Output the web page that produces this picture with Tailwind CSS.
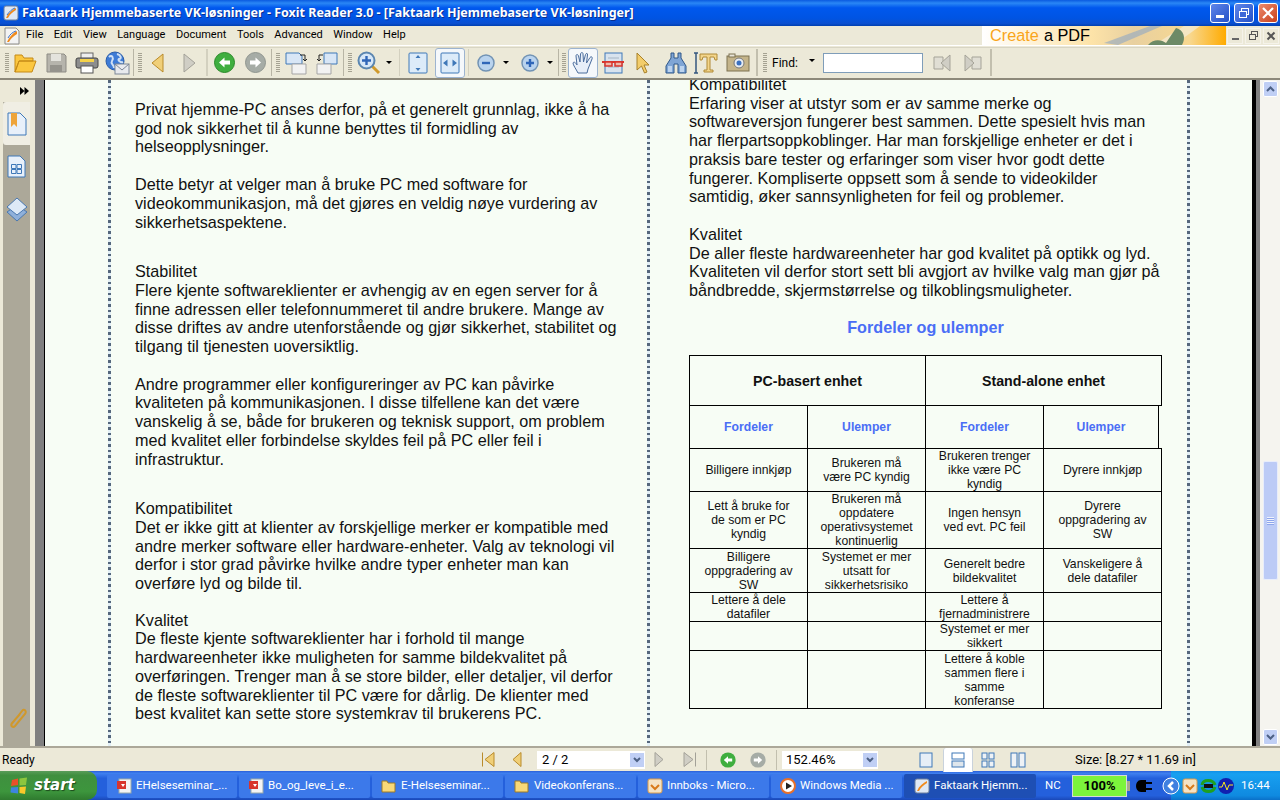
<!DOCTYPE html>
<html lang="no">
<head>
<meta charset="UTF-8">
<title>Foxit Reader</title>
<script src="https://cdn.jsdelivr.net/npm/@tailwindcss/browser@4"></script>
</head>
<body class="w-[1280px] h-[800px] overflow-hidden bg-[#ece9d8] font-['Roboto',sans-serif] text-[11px] text-black">
<!-- title bar -->
<div class="h-[26px] flex items-center bg-[linear-gradient(180deg,#0a5ae0_0%,#2a87f5_12%,#0058ee_30%,#0054e3_70%,#0a4fd0_90%,#003fb0_100%)]">
  <svg class="ml-[3px] w-[16px] h-[16px]" viewBox="0 0 16 16"><rect x="1" y="1" width="14" height="14" rx="2" fill="#dfe8f5" stroke="#6b7f9c"/><path d="M3 13C5 8 9 5 13 3L13 5C10 7 7 9 5 13Z" fill="#f08a1d"/><path d="M4 10C6 7 9 4 12 3" stroke="#3a6fc4" fill="none"/></svg>
  <div class="ml-[3px] font-['Noto_Sans',sans-serif] font-bold text-[12.500px] text-white whitespace-nowrap [text-shadow:1px_1px_0_#0a2f90]">Faktaark Hjemmebaserte VK-løsninger - Foxit Reader 3.0 - [Faktaark Hjemmebaserte VK-løsninger]</div>
  <div class="ml-auto mr-[2px] flex gap-[4px]">
    <div class="w-[20px] h-[20px] rounded-[3px] border border-white bg-[linear-gradient(135deg,#5f86ea,#2450c8)] flex items-end pl-[5px] pb-[4px]"><div class="w-[8px] h-[3px] bg-white"></div></div>
    <div class="w-[20px] h-[20px] rounded-[3px] border border-white bg-[linear-gradient(135deg,#5f86ea,#2450c8)] flex items-center justify-center"><svg class="w-[12px] h-[12px]" viewBox="0 0 12 12" fill="none" stroke="#fff"><rect x="3.5" y="1.5" width="7" height="6"/><rect x="1.5" y="4.5" width="7" height="6" fill="#3c66d8"/><path d="M1 4.5H9M3 1.5H11" /></svg></div>
    <div class="w-[20px] h-[20px] rounded-[3px] border border-white bg-[linear-gradient(135deg,#ec8a6c,#c8401c)] flex items-center justify-center"><svg class="w-[14px] h-[14px]" viewBox="0 0 14 14" stroke="#fff" stroke-width="2.2"><path d="M2 2L12 12M12 2L2 12"/></svg></div>
  </div>
</div>
<!-- menu bar -->
<div class="h-[20px] flex items-center border-b border-white">
  <svg class="ml-[4px] w-[16px] h-[18px]" viewBox="0 0 16 18"><path d="M1 1H12L15 4V17H1Z" fill="#f3f3f3" stroke="#8a8a8a"/><path d="M3 15C5 10 9 6 13 4L13 7C10 9 7 11 5 15Z" fill="#f08a1d"/><path d="M4 11C6 7 9 5 12 4" stroke="#3a6fc4" fill="none"/></svg>
  <div class="ml-[6px] flex gap-[10.500px] whitespace-nowrap">
    <span>File</span><span>Edit</span><span>View</span><span>Language</span><span>Document</span><span>Tools</span><span>Advanced</span><span>Window</span><span>Help</span>
  </div>
  <div class="relative ml-auto w-[244px] h-[19px] flex items-center pl-[8px] overflow-hidden bg-[linear-gradient(90deg,#ffffff_0%,#fde3a8_45%,#e8d0a0_62%,#f8d890_85%,#ffab00_100%)] font-['Liberation_Sans',sans-serif] text-[16.300px] leading-none whitespace-nowrap">
    <span class="text-[#f9a51a]">Create</span><span class="ml-[5px] text-black">a PDF</span>
    <svg class="absolute right-[12px] top-0 w-[110px] h-[19px]" viewBox="0 0 110 19"><path d="M0 17L46 0H58L14 19Z" fill="#8ea6c4" opacity=".6"/><path d="M50 19L80 0H96L70 19Z" fill="#f4ecd8" opacity=".7"/><path d="M44 19C50 12 58 14 62 17L72 2C80 4 82 12 78 19Z" fill="#6d8a66"/></svg>
  </div>
  <div class="flex gap-[2px] ml-[1px] mr-[1px]">
    <div class="w-[16px] h-[16px] border border-[#f5f3ea] flex items-end justify-center pb-[3px]"><div class="w-[7px] h-[2px] bg-[#666]"></div></div>
    <div class="w-[16px] h-[16px] border border-[#f5f3ea] flex items-center justify-center"><svg class="w-[11px] h-[11px]" viewBox="0 0 11 11" fill="none" stroke="#555"><rect x="3.5" y="1.5" width="6" height="5"/><rect x="1.5" y="4.5" width="6" height="5" fill="#ece9d8"/></svg></div>
    <div class="w-[16px] h-[16px] border border-[#f5f3ea] flex items-center justify-center"><svg class="w-[10px] h-[10px]" viewBox="0 0 10 10" stroke="#555" stroke-width="2"><path d="M1.500 1.500L8.500 8.500M8.500 1.500L1.500 8.500"/></svg></div>
  </div>
</div>
<!-- toolbar -->
<div class="h-[33px] mt-px flex items-center border-t border-[#d8d5c4] border-b-2 border-b-[#8d897a] pl-[5px] pb-[1px]">
  <div class="w-[4px] h-[20px] bg-[repeating-linear-gradient(180deg,#a5a292_0_1px,transparent_1px_2px)]"></div>
  <div class="w-[31px] flex justify-center"><svg class="w-[24px] h-[22px]" viewBox="0 0 24 22"><path d="M2 20V3H9L11 6H20V9H6L2 20L6 9H23L19 20Z" fill="#fbc73f" stroke="#c58a17" stroke-linejoin="round"/></svg></div>
  <div class="w-[31px] flex justify-center"><svg class="w-[22px] h-[22px]" viewBox="0 0 22 22"><path d="M2 2H19L21 4V20H2Z" fill="#b6b4ac" stroke="#8d8b84"/><rect x="6" y="2" width="10" height="7" fill="#e4e3dd"/><rect x="5" y="13" width="12" height="7" fill="#95938c"/></svg></div>
  <div class="w-[31px] flex justify-center"><svg class="w-[24px] h-[22px]" viewBox="0 0 24 22"><rect x="6" y="1" width="12" height="6" fill="#eee" stroke="#666"/><rect x="1" y="6" width="22" height="10" rx="2" fill="#8d8d8d" stroke="#444"/><rect x="5" y="7" width="14" height="3" fill="#f5d24a"/><rect x="6" y="14" width="12" height="7" fill="#fff" stroke="#555"/></svg></div>
  <div class="w-[31px] flex justify-center"><svg class="w-[25px] h-[24px]" viewBox="0 0 25 24"><circle cx="10" cy="10" r="9" fill="#3d7bd6" stroke="#2a5ca8"/><path d="M4 6C7 3 9 7 7 10C5 13 9 13 9 17M12 3C16 4 17 8 14 8C12 9 16 12 18 11" stroke="#cfe0f4" stroke-width="2" fill="none"/><rect x="10" y="13" width="14" height="10" fill="#e8eaee" stroke="#7d8796"/><path d="M10 13L17 19L24 13" fill="none" stroke="#7d8796"/></svg></div>
  <div class="w-px h-[27px] bg-[#b8b5a5]"></div>
  <div class="w-[4px]"></div>
  <div class="w-[4px] h-[20px] bg-[repeating-linear-gradient(180deg,#a5a292_0_1px,transparent_1px_2px)]"></div>
  <div class="w-[31px] flex justify-center"><svg class="w-[14px] h-[20px]" viewBox="0 0 14 20"><path d="M12 1V19L1 10Z" fill="#f0cf78" stroke="#b98b2b"/></svg></div>
  <div class="w-[32px] flex justify-center"><svg class="w-[14px] h-[20px]" viewBox="0 0 14 20"><path d="M2 1V19L13 10Z" fill="#d0cec5" stroke="#a3a198"/></svg></div>
  <div class="w-[2px] h-[27px] ml-[1px] bg-[#d3d0bf]"></div>
  <div class="w-[32px] flex justify-center"><svg class="w-[21px] h-[21px]" viewBox="0 0 21 21"><circle cx="10.500" cy="10.500" r="10" fill="#3fae3f" stroke="#2b8a2b"/><path d="M5 10.500L10.500 5.500V8.500H16V12.500H10.500V15.500Z" fill="#fff"/></svg></div>
  <div class="w-[31px] flex justify-center"><svg class="w-[21px] h-[21px]" viewBox="0 0 21 21"><circle cx="10.500" cy="10.500" r="10" fill="#a6aca6" stroke="#8f958f"/><path d="M16 10.500L10.500 5.500V8.500H5V12.500H10.500V15.500Z" fill="#fff"/></svg></div>
  <div class="w-px h-[27px] bg-[#b8b5a5]"></div>
  <div class="w-[4px]"></div>
  <div class="w-[4px] h-[20px] bg-[repeating-linear-gradient(180deg,#a5a292_0_1px,transparent_1px_2px)]"></div>
  <div class="w-[31px] flex justify-center"><svg class="w-[22px] h-[24px]" viewBox="0 0 22 24"><path d="M1 2H14L17 5V13H1Z" fill="#d8e6f6" stroke="#3f78b8"/><path d="M7 13H21V23H7Z" fill="#f2f2f2" stroke="#a5a5a5"/><path d="M15 4H20V9M18 8L20 10L22 8" fill="none" stroke="#222"/></svg></div>
  <div class="w-[32px] flex justify-center"><svg class="w-[22px] h-[24px]" viewBox="0 0 22 24"><path d="M8 2H21V13H8Z" fill="#d8e6f6" stroke="#3f78b8"/><path d="M1 13H15V23H1Z" fill="#f2f2f2" stroke="#a5a5a5"/><path d="M7 4H3V9M1 8L3 10L5 8" fill="none" stroke="#222"/></svg></div>
  <div class="w-px h-[27px] bg-[#b8b5a5]"></div>
  <div class="w-[4px]"></div>
  <div class="w-[4px] h-[20px] bg-[repeating-linear-gradient(180deg,#a5a292_0_1px,transparent_1px_2px)]"></div>
  <div class="w-[2px]"></div>
  <div class="w-[30px] flex justify-center"><svg class="w-[24px] h-[24px]" viewBox="0 0 24 24"><path d="M14 14L22 22" stroke="#d09a2c" stroke-width="3"/><circle cx="9.500" cy="9.500" r="8" fill="#d6e7f8" stroke="#5b86b0" stroke-width="2"/><path d="M5 9.500H14M9.500 5V14" stroke="#2f66b8" stroke-width="2.400"/></svg></div>
  <div class="w-[10px] flex justify-center"><div class="border-x-[3px] border-x-transparent border-t-[3px] border-t-black"></div></div>
  <div class="w-[5px]"></div>
  <div class="w-px h-[27px] bg-[#d3d0bf]"></div>
  <div class="w-[3px]"></div>
  <div class="w-[30px] flex justify-center"><svg class="w-[20px] h-[22px]" viewBox="0 0 20 22"><rect x="1" y="1" width="18" height="20" rx="1" fill="#dcebf9" stroke="#3f78b8"/><path d="M10 3L12.500 6H7.500ZM10 19L12.500 16H7.500Z" fill="#3f78b8"/></svg></div>
  <div class="w-[2px]"></div>
  <div class="w-[30px] h-[30px] rounded-[3px] border border-[#9db4d0] bg-[#f5f8fb] flex items-center justify-center"><svg class="w-[20px] h-[22px]" viewBox="0 0 20 22"><rect x="1" y="1" width="18" height="20" rx="1" fill="#dcebf9" stroke="#3f78b8"/><path d="M3 11L7.500 7.500V14.500ZM17 11L12.500 7.500V14.500Z" fill="#3f78b8"/></svg></div>
  <div class="w-[3px]"></div>
  <div class="w-px h-[27px] bg-[#d3d0bf]"></div>
  <div class="w-[2px]"></div>
  <div class="w-[30px] flex justify-center"><svg class="w-[18px] h-[18px]" viewBox="0 0 18 18"><circle cx="9" cy="9" r="8" fill="#b9d3ee" stroke="#7293b4" stroke-width="1.500"/><path d="M5 9H13" stroke="#2f66b8" stroke-width="2.400"/></svg></div>
  <div class="w-[10px] flex justify-center"><div class="border-x-[3px] border-x-transparent border-t-[3px] border-t-black"></div></div>
  <div class="w-[4px]"></div>
  <div class="w-[30px] flex justify-center"><svg class="w-[18px] h-[18px]" viewBox="0 0 18 18"><circle cx="9" cy="9" r="8" fill="#b9d3ee" stroke="#7293b4" stroke-width="1.500"/><path d="M5 9H13M9 5V13" stroke="#2f66b8" stroke-width="2.400"/></svg></div>
  <div class="w-[10px] flex justify-center"><div class="border-x-[3px] border-x-transparent border-t-[3px] border-t-black"></div></div>
  <div class="w-[3px]"></div>
  <div class="w-px h-[27px] bg-[#b8b5a5]"></div>
  <div class="w-[3px]"></div>
  <div class="w-[4px] h-[20px] bg-[repeating-linear-gradient(180deg,#a5a292_0_1px,transparent_1px_2px)]"></div>
  <div class="w-[2px]"></div>
  <div class="w-[30px] h-[30px] rounded-[3px] border border-[#9db4d0] bg-[#f5f8fb] flex items-center justify-center"><svg class="w-[24px] h-[24px]" viewBox="0 0 24 24"><path d="M7 22C5 18 2 14 2 12C3 10 5 12 6 14L5 5C5 3 7 3 7.500 5L9 11L9.500 3C10 1 12 1 12 3L12.500 11L14.500 3.500C15 2 17 2 16.500 4L15.500 12L19 6.500C20 5 22 6 21 8L17 18L16 22Z" fill="#e7eef8" stroke="#4a6c9c" stroke-linejoin="round"/></svg></div>
  <div class="w-[30px] flex justify-center"><svg class="w-[24px] h-[22px]" viewBox="0 0 24 22"><rect x="4" y="1" width="17" height="20" fill="#d8e3ee" stroke="#3f78b8"/><path d="M7 6H18M7 15H18" stroke="#a6b5c4"/><path d="M1 10H23" stroke="#d8342c" stroke-width="2"/><rect x="4" y="10" width="7" height="4" fill="#f0b8a8" stroke="#d8342c" stroke-width="1.500"/><rect x="14" y="10" width="7" height="4" fill="#f0b8a8" stroke="#d8342c" stroke-width="1.500"/></svg></div>
  <div class="w-[30px] flex justify-center"><svg class="w-[16px] h-[22px]" viewBox="0 0 16 22"><path d="M2 1L14 13H9L12 20L9.500 21L6.500 14L2 18Z" fill="#f3cd6b" stroke="#a8812b"/></svg></div>
  <div class="w-[2px]"></div>
  <div class="w-[32px] flex justify-center"><svg class="w-[22px] h-[22px]" viewBox="0 0 22 22"><path d="M6 1H9V6H13V1H16V6L21 14V21H13V12H9V21H1V14L6 6Z" fill="#7fa5d5" stroke="#2f5688"/><path d="M3 14H7V20H3ZM15 14H19V20H15Z" fill="#bcd3ee"/></svg></div>
  <div class="w-[32px] flex justify-center"><svg class="w-[30px] h-[22px]" viewBox="0 0 30 22"><path d="M1 1H5M3 1V21M1 21H5" stroke="#35577f" stroke-width="1.500" fill="none"/><path d="M7 2H24V8H22L21 5H17V18H20V20H11V18H14V5H10L9 8H7Z" fill="#f3d58a" stroke="#b08a36"/></svg></div>
  <div class="w-[30px] -ml-[1px] flex justify-center"><svg class="w-[24px] h-[19px]" viewBox="0 0 24 19"><rect x="1" y="3" width="22" height="15" fill="#c4b48a" stroke="#7d7250"/><rect x="3" y="1" width="6" height="3" fill="#e8e4d8" stroke="#7d7250"/><circle cx="13" cy="10" r="5" fill="#e8ecf0" stroke="#777"/><circle cx="13" cy="10" r="2.500" fill="#3a70c0"/></svg></div>
  <div class="w-[3px]"></div>
  <div class="w-[2px] h-[27px] bg-[#c2bfae]"></div>
  <div class="w-[5px]"></div>
  <div class="w-[4px] h-[20px] bg-[repeating-linear-gradient(180deg,#a5a292_0_1px,transparent_1px_2px)]"></div>
  <div class="ml-[5px] w-[34px] whitespace-nowrap text-[12px]">Find:</div>
  <div class="w-[12px] flex justify-center -mt-[5px]"><div class="border-x-[3px] border-x-transparent border-t-[3px] border-t-black"></div></div>
  <div class="ml-[5px] w-[100px] h-[20px] bg-white border border-[#7f9db9]"></div>
  <div class="w-[31px] ml-[10px]"><svg class="w-[18px] h-[18px]" viewBox="0 0 18 18"><path d="M1 3H10V15H1Z" fill="#e0ded4" stroke="#a5a398"/><path d="M17 1V17L8 9Z" fill="#d0cec5" stroke="#a5a398"/></svg></div>
  <div class="w-[26px]"><svg class="w-[18px] h-[18px]" viewBox="0 0 18 18"><path d="M8 3H17V15H8Z" fill="#e0ded4" stroke="#a5a398"/><path d="M1 1V17L10 9Z" fill="#d0cec5" stroke="#a5a398"/></svg></div>
  <div class="w-[2px] h-[27px] bg-[#c2bfae]"></div>
</div>
<!-- main -->
<div class="h-[666px] flex overflow-hidden">
  <!-- left panel -->
  <div class="w-[35px] shrink-0 bg-[linear-gradient(90deg,#ece9d8_0_3px,#aca899_3px_30px,#ece9d8_30px)] flex flex-col">
    <div class="h-[22px] bg-[#ece9d8] flex items-center justify-end pr-[4px]">
      <svg class="w-[9px] h-[8px] mr-[2px]" viewBox="0 0 9 8"><path d="M0 0L4.500 4L0 8ZM4.500 0L9 4L4.500 8Z" fill="#000"/></svg>
    </div>
    <div class="ml-[3px] w-[27px] h-[43px] bg-[#f0eee4] flex items-center justify-center rounded-l-[3px]">
      <svg class="w-[20px] h-[24px]" viewBox="0 0 20 24"><path d="M1 1H13L19 7V23H1Z" fill="#e8f0fa" stroke="#3f78b8"/><path d="M4 1H10V15L7 12L4 15Z" fill="#eea43a"/></svg>
    </div>
    <div class="ml-[3px] w-[27px] h-[42px] flex items-center justify-center">
      <svg class="w-[19px] h-[23px]" viewBox="0 0 19 23"><path d="M1 1H13L18 6V22H1Z" fill="#e8f0fa" stroke="#3f78b8"/><path d="M4.500 9.500H9V13.500H4.500ZM10 9.500H14.500V13.500H10ZM4.500 14.500H9V18.500H4.500ZM10 14.500H14.500V18.500H10Z" fill="none" stroke="#3f78b8"/></svg>
    </div>
    <div class="ml-[3px] w-[27px] h-[44px] flex items-center justify-center">
      <svg class="w-[22px] h-[25px]" viewBox="0 0 22 25"><path d="M1 15L11 8L21 15L11 24Z" fill="#8fb0da" stroke="#4a78b0"/><path d="M1 10L11 1L21 10L11 18Z" fill="#dde9f7" stroke="#4a78b0"/></svg>
    </div>
    <div class="ml-[3px] w-[27px] mt-auto mb-[17px] flex justify-center">
      <svg class="w-[20px] h-[24px]" viewBox="0 0 20 24" fill="none" stroke="#d0982c" stroke-width="2"><path d="M4 20L15 6C17 3 20 6 18 9L8 21C6 23 3 21 5 18L13 9"/></svg>
    </div>
  </div>
  <div class="w-[9px] shrink-0 bg-[#808080]"></div>
  <div class="w-px shrink-0 bg-black"></div>
  <!-- page -->
  <div class="w-[1207px] shrink-0 bg-[#f7fdf5] flex font-['Liberation_Sans',sans-serif] text-[16.200px] leading-[18.7px] text-[#111] whitespace-nowrap">
    <div class="w-[63px] shrink-0"></div>
    <div class="w-[3px] shrink-0 bg-[repeating-linear-gradient(180deg,#55677c_0_2.600px,#e2eff6_2.600px_5.600px)]"></div>
    <!-- left column -->
    <div class="w-[536px] shrink-0 pl-[24px] pt-[20px]">
      <div>Privat hjemme-PC anses derfor, på et generelt grunnlag, ikke å ha<br>god nok sikkerhet til å kunne benyttes til formidling av<br>helseopplysninger.</div>
      <div class="mt-[19px]">Dette betyr at velger man å bruke PC med software for<br>videokommunikasjon, må det gjøres en veldig nøye vurdering av<br>sikkerhetsaspektene.</div>
      <div class="mt-[31px]">Stabilitet<br>Flere kjente softwareklienter er avhengig av en egen server for å<br>finne adressen eller telefonnummeret til andre brukere. Mange av<br>disse driftes av andre utenforstående og gjør sikkerhet, stabilitet og<br>tilgang til tjenesten uoversiktlig.</div>
      <div class="mt-[19px]">Andre programmer eller konfigureringer av PC kan påvirke<br>kvaliteten på kommunikasjonen. I disse tilfellene kan det være<br>vanskelig å se, både for brukeren og teknisk support, om problem<br>med kvalitet eller forbindelse skyldes feil på PC eller feil i<br>infrastruktur.</div>
      <div class="mt-[31px]">Kompatibilitet<br>Det er ikke gitt at klienter av forskjellige merker er kompatible med<br>andre merker software eller hardware-enheter. Valg av teknologi vil<br>derfor i stor grad påvirke hvilke andre typer enheter man kan<br>overføre lyd og bilde til.</div>
      <div class="mt-[18px]">Kvalitet<br>De fleste kjente softwareklienter har i forhold til mange<br>hardwareenheter ikke muligheten for samme bildekvalitet på<br>overføringen. Trenger man å se store bilder, eller detaljer, vil derfor<br>de fleste softwareklienter til PC være for dårlig. De klienter med<br>best kvalitet kan sette store systemkrav til brukerens PC.</div>
    </div>
    <div class="w-[3px] shrink-0 bg-[repeating-linear-gradient(180deg,#55677c_0_2.600px,#e2eff6_2.600px_5.600px)]"></div>
    <!-- right column -->
    <div class="w-[537px] shrink-0 pl-[39px] -mt-[5px]">
      <div>Kompatibilitet<br>Erfaring viser at utstyr som er av samme merke og<br>softwareversjon fungerer best sammen. Dette spesielt hvis man<br>har flerpartsoppkoblinger. Har man forskjellige enheter er det i<br>praksis bare tester og erfaringer som viser hvor godt dette<br>fungerer. Kompliserte oppsett som å sende to videokilder<br>samtidig, øker sannsynligheten for feil og problemer.</div>
      <div class="mt-[19px]">Kvalitet<br>De aller fleste hardwareenheter har god kvalitet på optikk og lyd.<br>Kvaliteten vil derfor stort sett bli avgjort av hvilke valg man gjør på<br>båndbredde, skjermstørrelse og tilkoblingsmuligheter.</div>
      <div class="w-[473px] mt-[18px] text-center font-bold text-[#4a6ef5]">Fordeler og ulemper</div>
      <!-- table -->
      <div class="w-[473px] mt-[19px] border-l border-t border-black text-[12.200px] leading-[14px] text-center">
        <div class="flex h-[50px] font-bold text-[14.200px]">
          <div class="w-[236px] border-r border-b border-black flex items-center justify-center">PC-basert enhet</div>
          <div class="w-[236px] border-r border-b border-black flex items-center justify-center">Stand-alone enhet</div>
        </div>
        <div class="flex h-[43px] font-bold text-[#4a6ef5]">
          <div class="w-[118px] border-r border-b border-black flex items-center justify-center">Fordeler</div>
          <div class="w-[118px] border-r border-b border-black flex items-center justify-center">Ulemper</div>
          <div class="w-[118px] border-r border-b border-black flex items-center justify-center">Fordeler</div>
          <div class="w-[115px] border-r border-b border-black flex items-center justify-center">Ulemper</div>
          <div class="w-[3px] border-b border-black"></div>
        </div>
        <div class="flex h-[43px]">
          <div class="w-[118px] border-r border-b border-black flex items-center justify-center">Billigere innkjøp</div>
          <div class="w-[118px] border-r border-b border-black flex items-center justify-center">Brukeren må<br>være PC kyndig</div>
          <div class="w-[118px] border-r border-b border-black flex items-center justify-center">Brukeren trenger<br>ikke være PC<br>kyndig</div>
          <div class="w-[118px] border-r border-b border-black flex items-center justify-center">Dyrere innkjøp</div>
        </div>
        <div class="flex h-[57px]">
          <div class="w-[118px] border-r border-b border-black flex items-center justify-center">Lett å bruke for<br>de som er PC<br>kyndig</div>
          <div class="w-[118px] border-r border-b border-black flex items-center justify-center">Brukeren må<br>oppdatere<br>operativsystemet<br>kontinuerlig</div>
          <div class="w-[118px] border-r border-b border-black flex items-center justify-center">Ingen hensyn<br>ved evt. PC feil</div>
          <div class="w-[118px] border-r border-b border-black flex items-center justify-center">Dyrere<br>oppgradering av<br>SW</div>
        </div>
        <div class="flex h-[44px]">
          <div class="w-[118px] border-r border-b border-black flex items-center justify-center">Billigere<br>oppgradering av<br>SW</div>
          <div class="w-[118px] border-r border-b border-black flex items-center justify-center">Systemet er mer<br>utsatt for<br>sikkerhetsrisiko</div>
          <div class="w-[118px] border-r border-b border-black flex items-center justify-center">Generelt bedre<br>bildekvalitet</div>
          <div class="w-[118px] border-r border-b border-black flex items-center justify-center">Vanskeligere å<br>dele datafiler</div>
        </div>
        <div class="flex h-[29px]">
          <div class="w-[118px] border-r border-b border-black flex items-center justify-center">Lettere å dele<br>datafiler</div>
          <div class="w-[118px] border-r border-b border-black"></div>
          <div class="w-[118px] border-r border-b border-black flex items-center justify-center">Lettere å<br>fjernadministrere</div>
          <div class="w-[118px] border-r border-b border-black"></div>
        </div>
        <div class="flex h-[29px]">
          <div class="w-[118px] border-r border-b border-black"></div>
          <div class="w-[118px] border-r border-b border-black"></div>
          <div class="w-[118px] border-r border-b border-black flex items-center justify-center">Systemet er mer<br>sikkert</div>
          <div class="w-[118px] border-r border-b border-black"></div>
        </div>
        <div class="flex h-[58px]">
          <div class="w-[118px] border-r border-b border-black"></div>
          <div class="w-[118px] border-r border-b border-black"></div>
          <div class="w-[118px] border-r border-b border-black flex items-center justify-center">Lettere å koble<br>sammen flere i<br>samme<br>konferanse</div>
          <div class="w-[118px] border-r border-b border-black"></div>
        </div>
      </div>
    </div>
    <div class="w-[3px] shrink-0 bg-[repeating-linear-gradient(180deg,#55677c_0_2.600px,#e2eff6_2.600px_5.600px)]"></div>
  </div>
  <div class="w-[4px] shrink-0 bg-black"></div>
  <div class="w-[4px] shrink-0 bg-[#808080]"></div>
  <!-- scrollbar -->
  <div class="flex-1 bg-[#f5f4ef] flex flex-col items-center">
    <div class="mt-[1px] w-[15px] h-[16px] rounded-[2px] border border-white bg-[#c0cff5] flex items-center justify-center"><svg class="w-[9px] h-[6px]" viewBox="0 0 9 6"><path d="M1 5L4.500 1.500L8 5" fill="none" stroke="#4d6185" stroke-width="2"/></svg></div>
    <div class="mt-[364px] w-[15px] h-[119px] rounded-[2px] border border-[#e8edfb] bg-[#bccbf6] flex items-center justify-center"><div class="w-[7px] h-[8px] bg-[repeating-linear-gradient(180deg,#eef2fd_0_1px,#8ea6ec_1px_2px)]"></div></div>
    <div class="mt-auto mb-[1px] w-[15px] h-[16px] rounded-[2px] border border-white bg-[#c0cff5] flex items-center justify-center"><svg class="w-[9px] h-[6px]" viewBox="0 0 9 6"><path d="M1 1L4.500 4.500L8 1" fill="none" stroke="#4d6185" stroke-width="2"/></svg></div>
  </div>
</div>
<!-- status bar -->
<div class="h-[25px] flex items-center border-t-2 border-[#aca899] text-[12px] whitespace-nowrap">
  <div class="w-[473px] pl-[2px]">Ready</div>
  <div class="w-[30px] flex justify-center"><svg class="w-[14px] h-[15px]" viewBox="0 0 14 15"><path d="M1.500 0.500V14.500M13 0.500V14.500L4 7.500Z" fill="#f0cf78" stroke="#b98b2b"/></svg></div>
  <div class="w-[28px] flex justify-center"><svg class="w-[10px] h-[15px]" viewBox="0 0 10 15"><path d="M9 0.500V14.500L1 7.500Z" fill="#f0cf78" stroke="#b98b2b"/></svg></div>
  <div class="ml-[6px] w-[108px] h-[18px] bg-white flex items-center pl-[5px] text-[13px]">2 / 2<div class="ml-auto w-[14px] h-[14px] mr-[1px] bg-[#c0cff5] flex items-center justify-center"><svg class="w-[8px] h-[6px]" viewBox="0 0 8 6"><path d="M1 1L4 4L7 1" fill="none" stroke="#4d6185" stroke-width="2"/></svg></div></div>
  <div class="w-[28px] flex justify-center"><svg class="w-[10px] h-[15px]" viewBox="0 0 10 15"><path d="M1 0.500V14.500L9 7.500Z" fill="#d0cec5" stroke="#a3a198"/></svg></div>
  <div class="w-[33px] flex justify-center"><svg class="w-[14px] h-[15px]" viewBox="0 0 14 15"><path d="M12.500 0.500V14.500M1 0.500V14.500L10 7.500Z" fill="#d0cec5" stroke="#a3a198"/></svg></div>
  <div class="w-px h-[20px] bg-[#c2bfae]"></div>
  <div class="w-[30px] ml-[6px] flex justify-center"><svg class="w-[16px] h-[16px]" viewBox="0 0 21 21"><circle cx="10.500" cy="10.500" r="10" fill="#3fae3f"/><path d="M5 10.500L10.500 5.500V8.500H16V12.500H10.500V15.500Z" fill="#fff"/></svg></div>
  <div class="w-[30px] flex justify-center"><svg class="w-[16px] h-[16px]" viewBox="0 0 21 21"><circle cx="10.500" cy="10.500" r="10" fill="#a6aca6"/><path d="M16 10.500L10.500 5.500V8.500H5V12.500H10.500V15.500Z" fill="#fff"/></svg></div>
  <div class="w-px h-[20px] ml-[3px] bg-[#c2bfae]"></div>
  <div class="ml-[5px] w-[96px] h-[18px] bg-white flex items-center pl-[4px] text-[13px]">152.46%<div class="ml-auto w-[14px] h-[14px] mr-[1px] bg-[#c0cff5] flex items-center justify-center"><svg class="w-[8px] h-[6px]" viewBox="0 0 8 6"><path d="M1 1L4 4L7 1" fill="none" stroke="#4d6185" stroke-width="2"/></svg></div></div>
  <div class="w-[31px]"></div>
  <div class="w-[34px] flex justify-center"><svg class="w-[14px] h-[16px]" viewBox="0 0 14 16"><rect x="1" y="1" width="12" height="14" fill="#e6eef7" stroke="#3f78b8"/></svg></div>
  <div class="w-[30px] h-[24px] bg-white rounded-t-[3px] border-x border-[#c9d2dc] flex items-center justify-center"><svg class="w-[14px] h-[16px]" viewBox="0 0 14 16"><rect x="1" y="1" width="12" height="6" fill="#fff" stroke="#3f78b8"/><rect x="1" y="9" width="12" height="6" fill="#dfe6ec" stroke="#3f78b8"/></svg></div>
  <div class="w-[30px] flex justify-center"><svg class="w-[14px] h-[16px]" viewBox="0 0 14 16" fill="#eef2f6" stroke="#3f78b8"><rect x="1" y="1" width="5" height="6"/><rect x="8" y="1" width="5" height="6"/><rect x="1" y="9" width="5" height="6"/><rect x="8" y="9" width="5" height="6"/></svg></div>
  <div class="w-[30px] flex justify-center"><svg class="w-[16px] h-[16px]" viewBox="0 0 16 16" fill="#eef2f6" stroke="#3f78b8"><rect x="1" y="1" width="6" height="14"/><rect x="9" y="1" width="6" height="14"/></svg></div>
  <div class="ml-[42px] text-[13px]">Size: [8.27 * 11.69 in]</div>
</div>
<!-- taskbar -->
<div class="h-[29px] flex items-center bg-[linear-gradient(180deg,#2a5fd8_0%,#3f80f0_8%,#2460dc_25%,#2460dc_85%,#1a48b8_100%)] text-white text-[11.500px] whitespace-nowrap">
  <div class="w-[97px] h-[29px] rounded-r-[10px] bg-[linear-gradient(180deg,#5a9c5a_0%,#3f8f3f_15%,#3d963d_70%,#2f7a2f_100%)] flex items-center pl-[10px] shrink-0">
    <svg class="w-[18px] h-[18px]" viewBox="0 0 18 18"><path d="M2 3L8 1.500V8L1 9Z" fill="#e8502a"/><path d="M9.500 1.500L17 0.500L16 8L9.500 8.500Z" fill="#8cc63e"/><path d="M1 10.500L8 10V16.500L0.500 15.500Z" fill="#3d85e0"/><path d="M9.500 10L16 9.500L15 17L9.500 16Z" fill="#f8c82a"/></svg>
    <span class="ml-[6px] font-['DejaVu_Sans',sans-serif] font-bold italic text-[15px] [text-shadow:1px_1px_1px_#1c4a1c]">start</span>
  </div>
  <div class="ml-[10px] w-[130px] h-[24px] rounded-[2px] bg-[#3c79ea] flex items-center pl-[9px] gap-[4px]"><svg class="w-[16px] h-[16px]" viewBox="0 0 16 16"><rect x="3" y="1" width="12" height="14" fill="#f4f4f4" stroke="#9aa"/><rect x="1" y="3" width="9" height="8" fill="#d8342c"/><path d="M5 6L9 6L7 9Z" fill="#fff"/></svg>EHelseseminar_...</div>
  <div class="ml-[2px] w-[131px] h-[24px] rounded-[2px] bg-[#3c79ea] flex items-center pl-[9px] gap-[4px]"><svg class="w-[16px] h-[16px]" viewBox="0 0 16 16"><rect x="3" y="1" width="12" height="14" fill="#f4f4f4" stroke="#9aa"/><rect x="1" y="3" width="9" height="8" fill="#d8342c"/><path d="M5 6L9 6L7 9Z" fill="#fff"/></svg>Bo_og_leve_i_e...</div>
  <div class="ml-[2px] w-[131px] h-[24px] rounded-[2px] bg-[#3c79ea] flex items-center pl-[9px] gap-[4px]"><svg class="w-[16px] h-[14px]" viewBox="0 0 16 14"><path d="M1 13V2H6L7 4H14V13Z" fill="#f8d878" stroke="#9a7a2a"/></svg>E-Helseseminar...</div>
  <div class="ml-[2px] w-[131px] h-[24px] rounded-[2px] bg-[#3c79ea] flex items-center pl-[9px] gap-[4px]"><svg class="w-[16px] h-[14px]" viewBox="0 0 16 14"><path d="M1 13V2H6L7 4H14V13Z" fill="#f8d878" stroke="#9a7a2a"/></svg>Videokonferans...</div>
  <div class="ml-[2px] w-[131px] h-[24px] rounded-[2px] bg-[#3c79ea] flex items-center pl-[9px] gap-[4px]"><svg class="w-[16px] h-[16px]" viewBox="0 0 16 16"><rect x="1" y="1" width="14" height="14" rx="2" fill="#f5e3c4" stroke="#d89a4a"/><path d="M4 7L8 11L12 7" fill="none" stroke="#d87a1a" stroke-width="2"/></svg>Innboks - Micro...</div>
  <div class="ml-[2px] w-[131px] h-[24px] rounded-[2px] bg-[#3c79ea] flex items-center pl-[9px] gap-[4px]"><svg class="w-[16px] h-[16px]" viewBox="0 0 16 16"><circle cx="8" cy="8" r="7" fill="#fff" stroke="#e8702a" stroke-width="2"/><path d="M6 4.500L12 8L6 11.500Z" fill="#222"/></svg>Windows Media ...</div>
  <div class="ml-[2px] w-[132px] h-[24px] rounded-[2px] bg-[#1e4fb4] flex items-center pl-[10px] gap-[4px]"><svg class="w-[16px] h-[16px]" viewBox="0 0 16 16"><rect x="1" y="1" width="14" height="14" rx="2" fill="#dfe8f5" stroke="#6b7f9c"/><path d="M3 13C5 8 9 5 13 3L13 5C10 7 7 9 5 13Z" fill="#f08a1d"/></svg>Faktaark Hjemm...</div>
  <div class="ml-[9px] w-[20px]">NC</div>
  <div class="ml-[7px] w-[55px] h-[22px] bg-[#7cf43c] border border-[#d8d8d8] flex items-center justify-center text-black font-bold text-[13px]">100%</div>
  <div class="w-[3px] h-[10px] bg-[#a8a890]"></div>
  <svg class="ml-[6px] w-[17px] h-[12px]" viewBox="0 0 17 12"><path d="M5 1H9V11H5C2 11 1 8 1 6C1 4 2 1 5 1ZM9 3H16M9 9H16" fill="#000" stroke="#000" stroke-width="2"/></svg>
  <div class="ml-[18px] h-[29px] flex-1 bg-[linear-gradient(180deg,#1090e8_0%,#18a0f0_10%,#0f8ae0_85%,#0a70c8_100%)] flex items-center">
    <svg class="-ml-[9px] w-[18px] h-[18px]" viewBox="0 0 18 18"><circle cx="9" cy="9" r="8" fill="#3f80e0" stroke="#fff"/><path d="M11 5L7 9L11 13" fill="none" stroke="#fff" stroke-width="2.500"/></svg>
    <svg class="ml-[2px] w-[16px] h-[16px]" viewBox="0 0 16 16"><rect x="1" y="1" width="14" height="14" rx="2" fill="#f5e3c4" stroke="#d89a4a"/><path d="M4 7L8 11L12 7" fill="none" stroke="#d87a1a" stroke-width="2"/></svg>
    <svg class="ml-[2px] w-[17px] h-[16px]" viewBox="0 0 17 16"><path d="M2 7C3 1 13 1 15 7M15 9C13 15 4 15 2 9" fill="none" stroke="#1fa01f" stroke-width="3"/><rect x="4" y="6" width="9" height="4" fill="#111"/></svg>
    <svg class="ml-[1px] w-[16px] h-[16px]" viewBox="0 0 16 16"><circle cx="8" cy="8" r="8" fill="#1020b0"/><path d="M1 9H4L6 4L9 12L11 7H15" fill="none" stroke="#f8e820"/></svg>
    <span class="ml-[7px]">16:44</span>
  </div>
</div>
</body>
</html>
